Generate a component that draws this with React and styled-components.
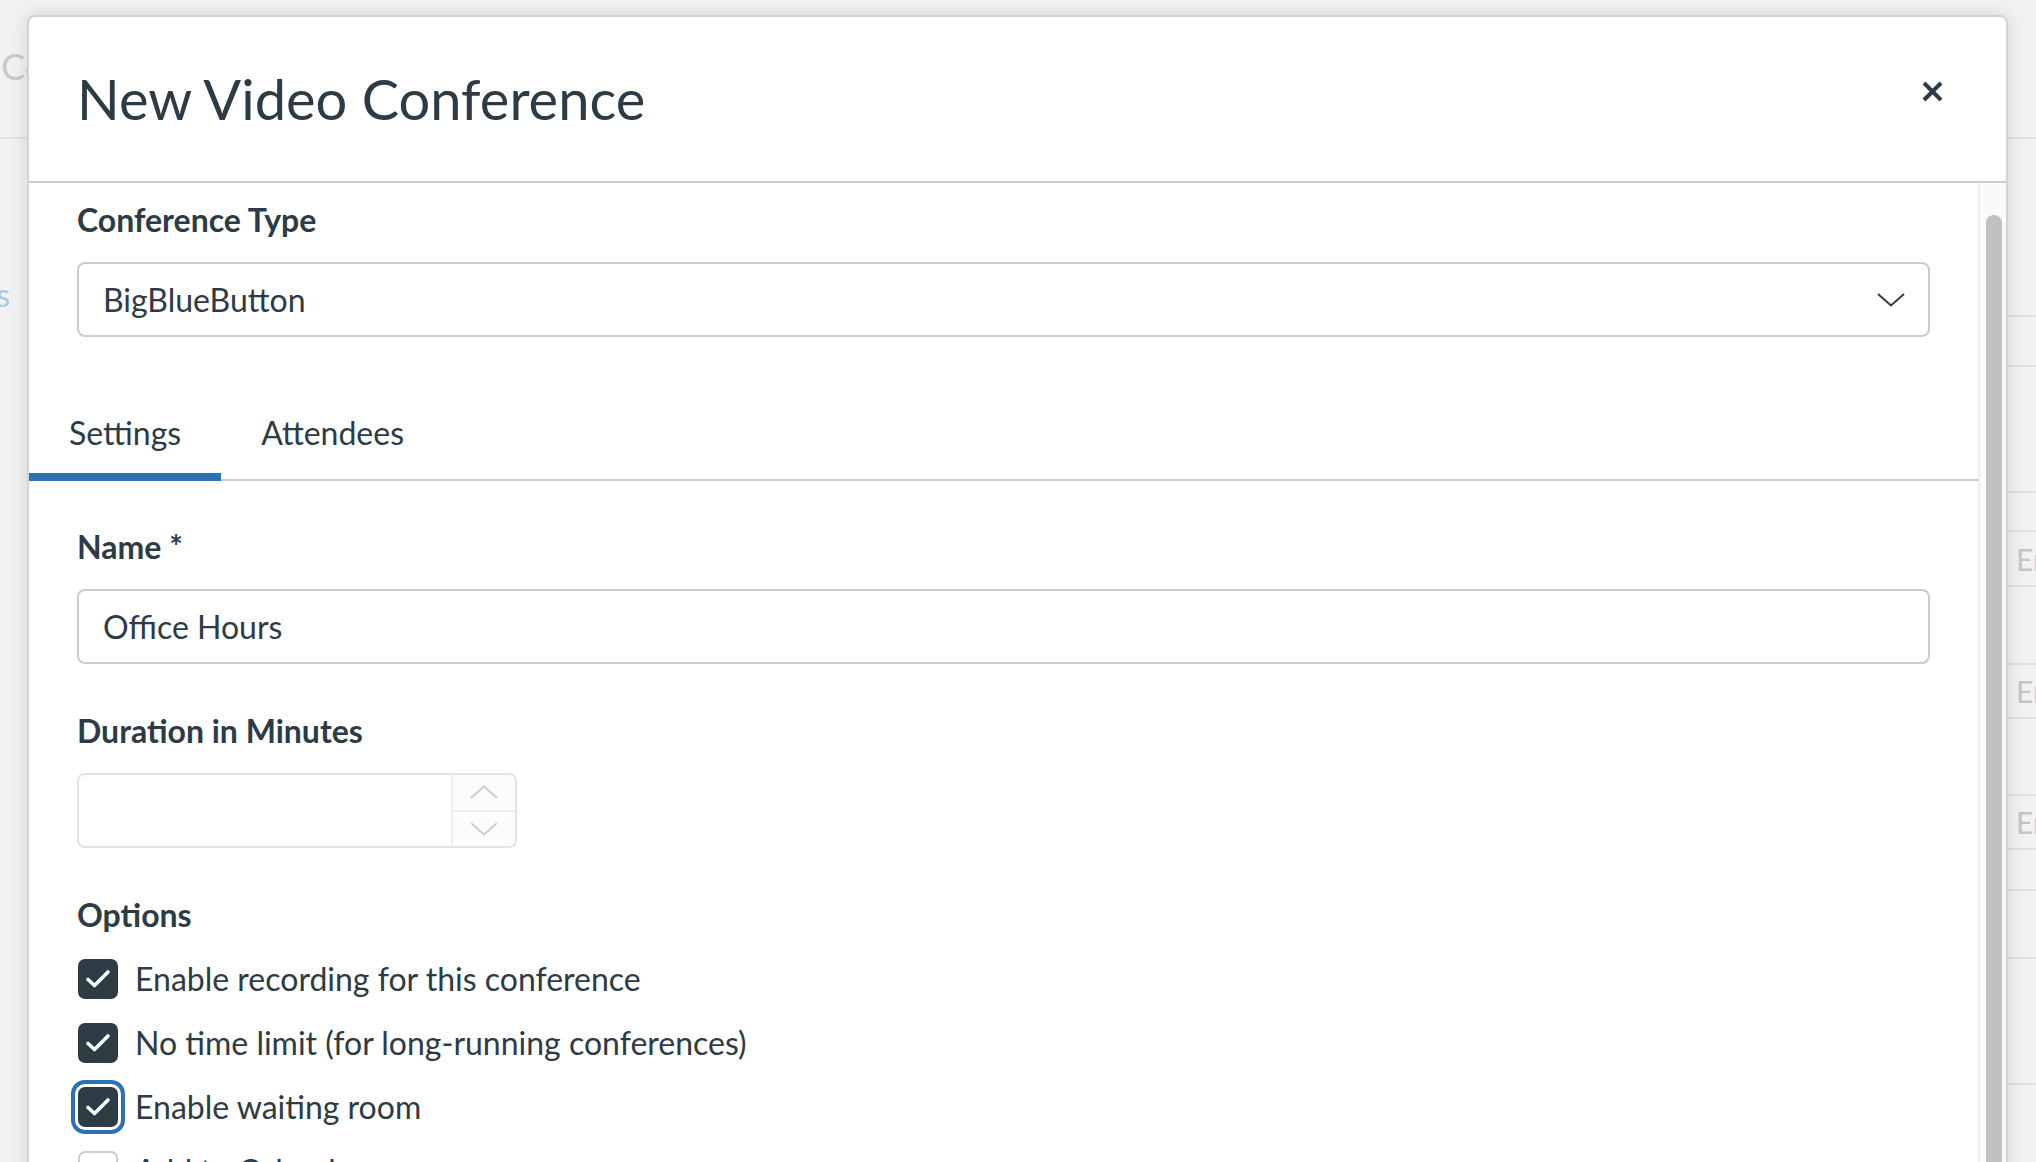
import React from 'react';
import styled, { createGlobalStyle, css } from 'styled-components';

const GlobalStyle = createGlobalStyle`
  * { box-sizing: border-box; }
  html, body { margin: 0; padding: 0; overflow: hidden; background: #f2f2f2; }
  body { font-family: Lato, "Noto Sans", "Liberation Sans", sans-serif; color: #2d3b45; }
`;

const TEXT = '#2d3b45';
const BORDER = '#c7cdd1';

/* ---------- background page ---------- */
const Page = styled.div`
  position: relative;
  width: 2036px;
  height: 1162px;
  overflow: hidden;
  background: #f2f2f2;
`;

const BgHeader = styled.div`
  height: 139px;
  border-bottom: 2px solid #e2e2e2;
  padding: 44px 0 0 1px;
`;

const BgTitle = styled.div`
  width: 26px;
  overflow: hidden;
  white-space: nowrap;
  font-size: 36px;
  line-height: 44px;
  color: #c6cbce;
`;

const BgMain = styled.div`
  display: flex;
`;

const BgNav = styled.nav`
  flex: none;
  width: 40px;
  padding-top: 132px;
  overflow: hidden;
`;

const BgNavLink = styled.div`
  display: flex;
  justify-content: flex-end;
  padding-right: 30px;
  font-size: 32px;
  line-height: 48px;
  white-space: nowrap;
  color: #adc8e2;
`;

const BgTable = styled.div`
  flex: 1;
  display: flex;
  flex-direction: column;
`;

const BgRow = styled.div`
  flex: none;
  display: flex;
  align-items: center;
  justify-content: flex-end;
  border-bottom: 2px solid #e2e2e2;
`;

const BgCell = styled.div`
  width: 20px;
  overflow: hidden;
  white-space: nowrap;
  font-size: 30px;
  color: #c6c6c6;
`;

/* ---------- modal ---------- */
const Modal = styled.div`
  position: absolute;
  top: 15px;
  left: 27px;
  width: 1981px;
  height: 1220px;
  background: #fff;
  border: 2px solid #cfd4d8;
  border-radius: 8px;
  box-shadow: 0 0 20px rgba(0, 0, 0, 0.13);
  display: flex;
  flex-direction: column;
  overflow: hidden;
`;

const Header = styled.header`
  flex: none;
  height: 166px;
  border-bottom: 2px solid ${BORDER};
  display: flex;
  justify-content: space-between;
  align-items: flex-start;
  padding: 0 63px 0 48px;
`;

const Title = styled.h2`
  align-self: center;
  margin: 0;
  font-size: 56px;
  line-height: 1.2;
  font-weight: 400;
  color: ${TEXT};
`;

const CloseButton = styled.button`
  margin-top: 64px;
  padding: 0;
  width: 21px;
  height: 21px;
  border: none;
  background: none;
  display: flex;
  cursor: pointer;
`;

const Body = styled.div`
  flex: 1;
  min-height: 0;
  display: flex;
`;

const Content = styled.div`
  flex: 1;
  min-width: 0;
  padding: 13px 48px 0;
`;

const ScrollTrack = styled.div`
  flex: none;
  width: 28px;
  background: #fafafa;
  border-left: 2px solid #ececec;
  padding: 32px 4px 0 6px;
  display: flex;
`;

const ScrollThumb = styled.div`
  flex: 1;
  background: #c1c1c1;
  border-radius: 8px;
`;

const Label = styled.div`
  font-size: 32px;
  line-height: 48px;
  font-weight: 700;
  color: ${TEXT};
  margin-bottom: ${(p) => p.$gap ?? 18}px;
`;

const Select = styled.div`
  height: 75px;
  border: 2px solid ${BORDER};
  border-radius: 8px;
  display: flex;
  align-items: center;
  justify-content: space-between;
  padding: 0 23px 0 24px;
  font-size: 32px;
  color: ${TEXT};
`;

const TabList = styled.div`
  display: flex;
  margin: 48px -48px 0;
  border-bottom: 2px solid ${BORDER};
`;

const Tab = styled.div`
  position: relative;
  padding: 24px 40px 22px;
  font-size: 32px;
  line-height: 48px;
  color: ${TEXT};
  ${(p) =>
    p.$selected &&
    css`
      &::after {
        content: '';
        position: absolute;
        left: 0;
        right: 0;
        bottom: -2px;
        height: 8px;
        background: #2d71b5;
      }
    `}
`;

const Panel = styled.div`
  padding-top: 42px;
`;

const Field = styled.div`
  margin-bottom: 43px;
`;

const TextInput = styled.input`
  display: block;
  width: 100%;
  height: 75px;
  border: 2px solid ${BORDER};
  border-radius: 8px;
  padding: 0 24px;
  font-family: inherit;
  font-size: 32px;
  color: ${TEXT};
  background: #fff;
  outline: none;
`;

const NumberBox = styled.div`
  width: 440px;
  height: 75px;
  border: 2px solid #e1e4e7;
  border-radius: 8px;
  display: flex;
  overflow: hidden;
`;

const NumberValue = styled.div`
  flex: 1;
`;

const Spinner = styled.div`
  flex: none;
  width: 64px;
  border-left: 2px solid #eceef0;
  background: #fcfcfc;
  display: flex;
  flex-direction: column;
`;

const SpinHalf = styled.div`
  flex: 1;
  display: flex;
  align-items: center;
  justify-content: center;
  & + & {
    border-top: 2px solid #eceef0;
  }
`;

const OptionList = styled.div`
  display: flex;
  flex-direction: column;
  gap: 16px;
`;

const OptionRow = styled.label`
  height: 48px;
  display: flex;
  align-items: center;
  gap: 17px;
  font-size: 32px;
  line-height: 48px;
  color: ${TEXT};
`;

const Box = styled.span`
  flex: none;
  width: 40px;
  height: 40px;
  margin-left: 1px;
  border-radius: 7px;
  display: flex;
  align-items: center;
  justify-content: center;
  ${(p) =>
    p.$checked
      ? css`
          background: ${TEXT};
        `
      : css`
          background: #fff;
          border: 2px solid ${BORDER};
        `}
  ${(p) =>
    p.$focused &&
    css`
      box-shadow: 0 0 0 3px #fff, 0 0 0 7px #2d71b5;
    `}
`;

const Chevron = ({ up, color, width = 28 }) => (
  <svg width={width} height="14" viewBox="0 0 28 14" fill="none">
    <path
      d={up ? 'M1 13 L14 1.5 L27 13' : 'M1 1 L14 12.5 L27 1'}
      stroke={color}
      strokeWidth="2"
    />
  </svg>
);

const Check = () => (
  <svg width="24" height="18" viewBox="0 0 24 18" fill="none">
    <path
      d="M2 9.5 L8.5 15.5 L22 2"
      stroke="#fff"
      strokeWidth="3.6"
      strokeLinecap="round"
      strokeLinejoin="round"
    />
  </svg>
);

const bgLines = [315, 365, 491, 530, 585, 663, 717, 794, 848, 889, 957, 1083, 1240];
const bgText = { 585: 'Enter', 717: 'Enter', 848: 'Enter' };

const options = [
  { label: 'Enable recording for this conference', checked: true },
  { label: 'No time limit (for long-running conferences)', checked: true },
  { label: 'Enable waiting room', checked: true, focused: true },
  { label: 'Add to Calendar', checked: false },
];

export default function App() {
  let prev = 139;
  return (
    <>
      <GlobalStyle />
      <Page>
        <BgHeader>
          <BgTitle>Conferences</BgTitle>
        </BgHeader>
        <BgMain>
          <BgNav>
            <BgNavLink>Conferences</BgNavLink>
          </BgNav>
          <BgTable>
            {bgLines.map((y) => {
              const h = y - prev;
              prev = y + 2;
              return (
                <BgRow key={y} style={{ height: h + 2 }}>
                  {bgText[y] && <BgCell>{bgText[y]}</BgCell>}
                </BgRow>
              );
            })}
          </BgTable>
        </BgMain>

        <Modal role="dialog" aria-label="New Video Conference">
          <Header>
            <Title>New Video Conference</Title>
            <CloseButton aria-label="Close">
              <svg width="21" height="21" viewBox="0 0 21 21" fill="none">
                <path d="M2 2 L19 19 M19 2 L2 19" stroke={TEXT} strokeWidth="4" />
              </svg>
            </CloseButton>
          </Header>
          <Body>
            <Content>
              <Label>Conference Type</Label>
              <Select>
                <span>BigBlueButton</span>
                <Chevron color={TEXT} />
              </Select>

              <TabList>
                <Tab $selected>Settings</Tab>
                <Tab>Attendees</Tab>
              </TabList>

              <Panel>
                <Field>
                  <Label>Name *</Label>
                  <TextInput readOnly value="Office Hours" />
                </Field>
                <Field>
                  <Label>Duration in Minutes</Label>
                  <NumberBox>
                    <NumberValue />
                    <Spinner>
                      <SpinHalf>
                        <Chevron up color="#c9ced2" />
                      </SpinHalf>
                      <SpinHalf>
                        <Chevron color="#c9ced2" />
                      </SpinHalf>
                    </Spinner>
                  </NumberBox>
                </Field>
                <Label $gap={16}>Options</Label>
                <OptionList>
                  {options.map((o) => (
                    <OptionRow key={o.label}>
                      <Box $checked={o.checked} $focused={o.focused}>
                        {o.checked && <Check />}
                      </Box>
                      {o.label}
                    </OptionRow>
                  ))}
                </OptionList>
              </Panel>
            </Content>
            <ScrollTrack>
              <ScrollThumb />
            </ScrollTrack>
          </Body>
        </Modal>
      </Page>
    </>
  );
}
